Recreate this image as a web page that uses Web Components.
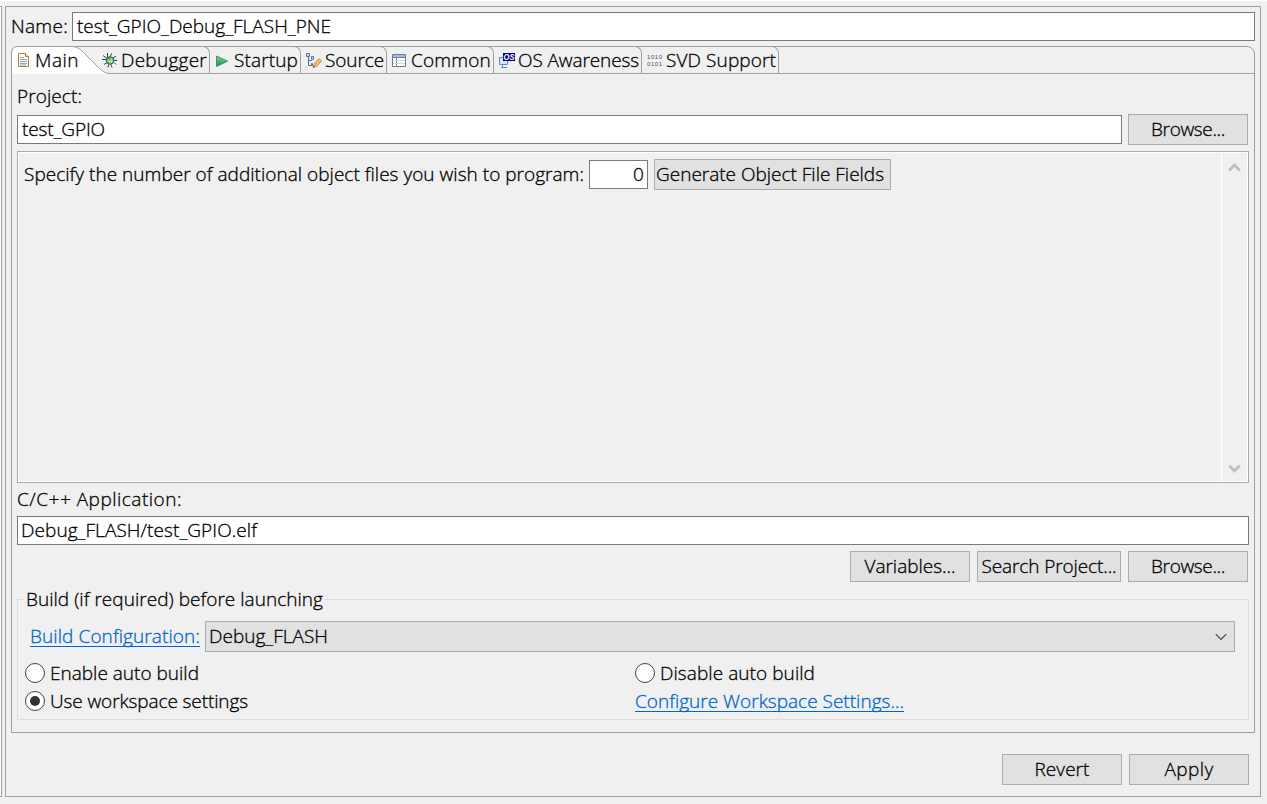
<!DOCTYPE html>
<html lang="en">
<head>
<meta charset="utf-8">
<title>Debug Configurations</title>
<style>
html,body{margin:0;padding:0}
body{width:1267px;height:804px;overflow:hidden;background:#f0f0f0;color:#000;font:300 19px/26px "Open Sans","Noto Sans",sans-serif;-webkit-text-stroke:.3px}
</style>
</head>
<body>
<launch-dialog></launch-dialog>
<script>
const define=(name,css,html,ready)=>customElements.define(name,class extends HTMLElement{
  connectedCallback(){
    if(this.shadowRoot)return;
    this.attachShadow({mode:'open'}).innerHTML=`<style>*{box-sizing:border-box}:host{box-sizing:border-box}${css}</style>${typeof html==='function'?html(this):html}`;
    if(ready)ready(this);
  }
});
const icons={
 doc:`<path d="M2.500 1.500h7l3 3v10h-10z" fill="#fffdf2" stroke="#a8873f"/><path d="M9.500 1.500v3h3" fill="#eed9a0" stroke="#a8873f"/><path d="M4 5.500h4M4 7.500h7M4 9.500h7M4 11.500h7M4 13h6" stroke="#8aa3cf"/>`,
 bug:`<g fill="none" stroke="#1d4a4a"><path d="M5.500 0v4M9.500 .5l-1 3M1 2.500l4 3M0 6.500h4M2 11.500l3-2M6 14.500l.5-3M10 14.500l-1-3M14 11.500l-2-2M15 7.500h-3M14 3l-3 2"/></g><ellipse cx="8" cy="7.500" rx="3.700" ry="3.800" fill="#8cc78c" stroke="#1d5050"/><path d="M5.500 4.500l4 3" stroke="#2d6b5c"/><circle cx="9" cy="8" r="1.800" fill="#c5e08a"/>`,
 play:`<defs><linearGradient id="g" x2="0" y2="1"><stop stop-color="#8fd09a"/><stop offset=".6" stop-color="#48a568"/><stop offset="1" stop-color="#238a48"/></linearGradient></defs><path d="M1.500 3l11 5.200-11 5.300z" fill="url(#g)" stroke="#3a9a58"/>`,
 source:`<path d="M2.500 4v8.500h3M2.500 7.500h3" fill="none" stroke="#49679c"/><path d="M.5 .5h3v3h-3zM5.500 3.500h2v3h-2zM5.500 10.500h1v2h-1z" fill="#c5d5f0" stroke="#5674ab"/><path d="M7 14.500l1-3.500 5-5.500 2.500 2.500-5 5.500z" fill="#f5b866" stroke="#d09555"/><path d="M7 14.500l.7-2 1.400 1.200z" fill="#444"/>`,
 common:`<path d="M.5 1.500h13v12H.5z" fill="#fff" stroke="#6a7b98"/><path d="M1 2h12v2H1z" fill="#a9bad3"/><path d="M1 4.500h12M4.500 4.500v9" stroke="#71829c"/><path d="M1 7.500h12M1 10.500h12" stroke="#cdd7e5"/>`,
 os:`<path d="M.5 4.500h8v7h-8z" fill="#d3e4f4" stroke="#6189b5"/><path d="M2 14.500h6M3.500 12v2" stroke="#6189b5"/><path d="M4 0h12v8H4z" fill="#000084"/><text x="4.500" y="7" textLength="11" lengthAdjust="spacingAndGlyphs" font-family="Liberation Sans" font-size="8.500" font-weight="700" font-style="italic" fill="#fff">OS</text>`,
 svd:`<g font-family="Liberation Sans" font-size="6" font-weight="400" fill="#3a5078"><text x="1" y="6" textLength="15">1010</text><text x="1" y="13" textLength="15">0101</text></g>`
};
/* A run of text tracked to an exact advance width. */
define('ui-text',`:host{display:block;white-space:nowrap;flex:none;padding-bottom:var(--lift,0px)}span{display:inline-block;height:26px;vertical-align:top;white-space:nowrap}:host([link]) span{color:#0066cc;background:linear-gradient(#0066cc,#0066cc) 0 23px/100% 1px no-repeat}`,
 '<span><slot></slot></span>',
 el=>{const w=+el.getAttribute('w'),s=el.shadowRoot.querySelector('span');
  if(w){s.style.letterSpacing='0';const n=el.textContent.length;s.style.letterSpacing=(w-s.getBoundingClientRect().width)/n+'px';el.style.width=w+'px'}});
define('ui-icon',':host{display:block;width:16px;height:16px;flex:none}svg{display:block;overflow:visible;-webkit-text-stroke:0}',el=>`<svg width="16" height="16" viewBox="0 0 16 16">${icons[el.getAttribute('name')]}</svg>`);
define('ui-field',':host{--lift:2px;display:flex;align-items:center;height:29px;border:1px solid #7a7a7a;background:#fff;padding:0 3px 0 4px}:host([end]){justify-content:flex-end}','<slot></slot>');
define('ui-button',':host{--lift:2px;display:flex;align-items:center;justify-content:center;width:120px;height:31px;border:1px solid #adadad;background:#e1e1e1;flex:none}','<slot></slot>');
define('ui-radio',':host{display:flex;align-items:center;gap:5px;height:28px}i{display:grid;place-items:center;width:20px;height:20px;border:1.300px solid #444;border-radius:50%;background:#fff}:host([checked]) i::after{content:"";width:10px;height:10px;border-radius:50%;background:#333}','<i></i><slot></slot>');
define('ui-combo',':host{--lift:2px;display:flex;align-items:center;justify-content:space-between;height:31px;flex:1;border:1px solid #adadad;background:#e1e1e1;padding:0 7px 0 3px}svg{display:block}','<slot></slot><svg width="12" height="8"><path d="M.8 1.200L6 6.400l5.200-5.200" fill="none" stroke="#444" stroke-width="1.200"/></svg>');
define('ui-tab',`:host{--lift:1px;display:flex;align-items:center;flex:none;border-right:1px solid #a0a0a0;border-top:1px solid #a0a0a0;margin-top:-1px;height:28px;border-top-right-radius:7px;padding-left:5px}:host([active]){--lift:0px;border:0;padding:0;position:relative;width:90px}:host([active]) ui-icon{position:relative;margin-left:4px}svg.bg{position:absolute;left:-1px;top:0;overflow:visible}.t{margin-left:var(--gap,3px);position:relative}`,
 el=>`${el.hasAttribute('active')?'<svg class="bg" width="97" height="28"><path d="M1 28V7Q1 .5 7 .5H60C68 .5 71 5 75 9L86 20Q93 27.500 98 27.500V28z" fill="#fff"/><path d="M.5 27V7Q.5 .5 7 .5H60C68 .5 71 5 75 9L86 20Q93 27.500 98 27.500" fill="none" stroke="#a0a0a0"/></svg>':''}<ui-icon name="${el.getAttribute('icon')}"></ui-icon><div class="t"><slot></slot></div>`);
define('ui-tabs',`:host{display:flex;flex-direction:column;height:687px;border:1px solid #a0a0a0;border-radius:8px 8px 0 0}nav{display:flex;height:27px;border-bottom:1px solid #a0a0a0}main{padding:9px 5px 0 5px}`,'<nav><slot name="tab"></slot></nav><main><slot></slot></main>');
define('ui-scroll',`:host{display:flex;height:332px;border:1px solid #a9a9ae}.body{flex:1;display:flex;align-items:flex-start;padding:6px 0 0 5px;border:1px solid #fff}aside{width:26px;border:solid #fff;border-width:1px 1px 1px 0;display:flex;flex-direction:column;justify-content:space-between;align-items:center;padding:9px 0 7px}svg{display:block}`,
 '<div class="body"><slot></slot></div><aside><svg width="13" height="10"><path d="M1.200 8.500L6.500 3l5.300 5.500" fill="none" stroke="#bfbfbf" stroke-width="2.800"/></svg><svg width="13" height="10"><path d="M1.200 1.500L6.500 7l5.300-5.500" fill="none" stroke="#bfbfbf" stroke-width="2.800"/></svg></aside>');
define('ui-group',`fieldset{margin:0;min-width:0;height:134px;border:1px solid #dcdcdc;padding:0}:host{display:block}legend{margin-left:6px;padding:0 2px;height:27px}`,'<fieldset><legend><slot name="title"></slot></legend><slot></slot></fieldset>');
define('launch-dialog',`:host{display:flex;gap:3px;width:1267px;height:804px;border-top:1px solid #fff;padding-top:5px}
.rail{width:2px;height:791px;background:#fff;border:solid #a0a0a0;border-width:1px 1px 1px 0}
.panel{width:1256px;height:791px;border:1px solid #a0a0a0;padding:5px 5px 0}
.row{display:flex}.name{align-items:center;margin-bottom:5px;--lift:2px}.name>ui-text{margin-right:4px}.name ui-field,.grow{flex:1}
.project{align-items:center;gap:6px;margin:5px 1px 6px 0}
.files{display:flex;align-items:center;--lift:2px}.files ui-field{width:59px;margin:0 6px 0 5px}.files ui-button{width:237px;justify-content:flex-start;padding-left:1px}
.app{margin:3px 0 4px}.buttons{justify-content:flex-end;gap:7px;margin:6px 1px 4px 0}
.conf{align-items:center;gap:5px;padding:0 13px 0 12px;margin-top:8px;--lift:2px}
.opts{display:grid;grid-template-columns:610px 1fr;padding:0 7px;margin-top:7px}.opts>[link]{margin-top:1px}
.foot{justify-content:flex-end;gap:7px;padding:21px 6px 0 0}`,
`<div class="rail"></div><div class="panel">
<div class="row name"><ui-text w="57">Name:</ui-text><ui-field><ui-text w="254">test_GPIO_Debug_FLASH_PNE</ui-text></ui-field></div>
<ui-tabs>
 <ui-tab slot="tab" active icon="doc"><ui-text w="44">Main</ui-text></ui-tab>
 <ui-tab slot="tab" icon="bug" style="width:108px;padding-left:0"><ui-text w="86">Debugger</ui-text></ui-tab>
 <ui-tab slot="tab" icon="play" style="width:91px"><ui-text w="64">Startup</ui-text></ui-tab>
 <ui-tab slot="tab" icon="source" style="width:86px"><ui-text w="59">Source</ui-text></ui-tab>
 <ui-tab slot="tab" icon="common" style="width:107px;--gap:3px"><ui-text w="80">Common</ui-text></ui-tab>
 <ui-tab slot="tab" icon="os" style="width:148px"><ui-text w="121">OS Awareness</ui-text></ui-tab>
 <ui-tab slot="tab" icon="svd" style="width:137px;padding-left:4px;--gap:4px"><ui-text w="110">SVD Support</ui-text></ui-tab>
 <ui-text w="65">Project:</ui-text>
 <div class="row project"><ui-field class="grow"><ui-text w="83">test_GPIO</ui-text></ui-field><ui-button><ui-text w="74">Browse...</ui-text></ui-button></div>
 <ui-scroll><div class="files"><ui-text w="560">Specify the number of additional object files you wish to program:</ui-text><ui-field end><ui-text w="11">0</ui-text></ui-field><ui-button><ui-text w="228">Generate Object File Fields</ui-text></ui-button></div></ui-scroll>
 <div class="app"><ui-text w="165">C/C++ Application:</ui-text></div>
 <ui-field style="padding-left:3px"><ui-text w="236">Debug_FLASH/test_GPIO.elf</ui-text></ui-field>
 <div class="row buttons"><ui-button><ui-text w="91">Variables...</ui-text></ui-button><ui-button style="width:144px"><ui-text w="135">Search Project...</ui-text></ui-button><ui-button><ui-text w="74">Browse...</ui-text></ui-button></div>
 <ui-group><ui-text slot="title" w="297">Build (if required) before launching</ui-text>
  <div class="row conf"><ui-text link w="170">Build Configuration:</ui-text><ui-combo><ui-text w="119">Debug_FLASH</ui-text></ui-combo></div>
  <div class="opts"><ui-radio><ui-text w="149">Enable auto build</ui-text></ui-radio><ui-radio><ui-text w="155">Disable auto build</ui-text></ui-radio><ui-radio checked><ui-text w="198">Use workspace settings</ui-text></ui-radio><ui-text link w="269">Configure Workspace Settings...</ui-text></div>
 </ui-group>
</ui-tabs>
<div class="row foot"><ui-button><ui-text w="55">Revert</ui-text></ui-button><ui-button><ui-text w="49">Apply</ui-text></ui-button></div>
</div>`);
</script>
</body>
</html>
